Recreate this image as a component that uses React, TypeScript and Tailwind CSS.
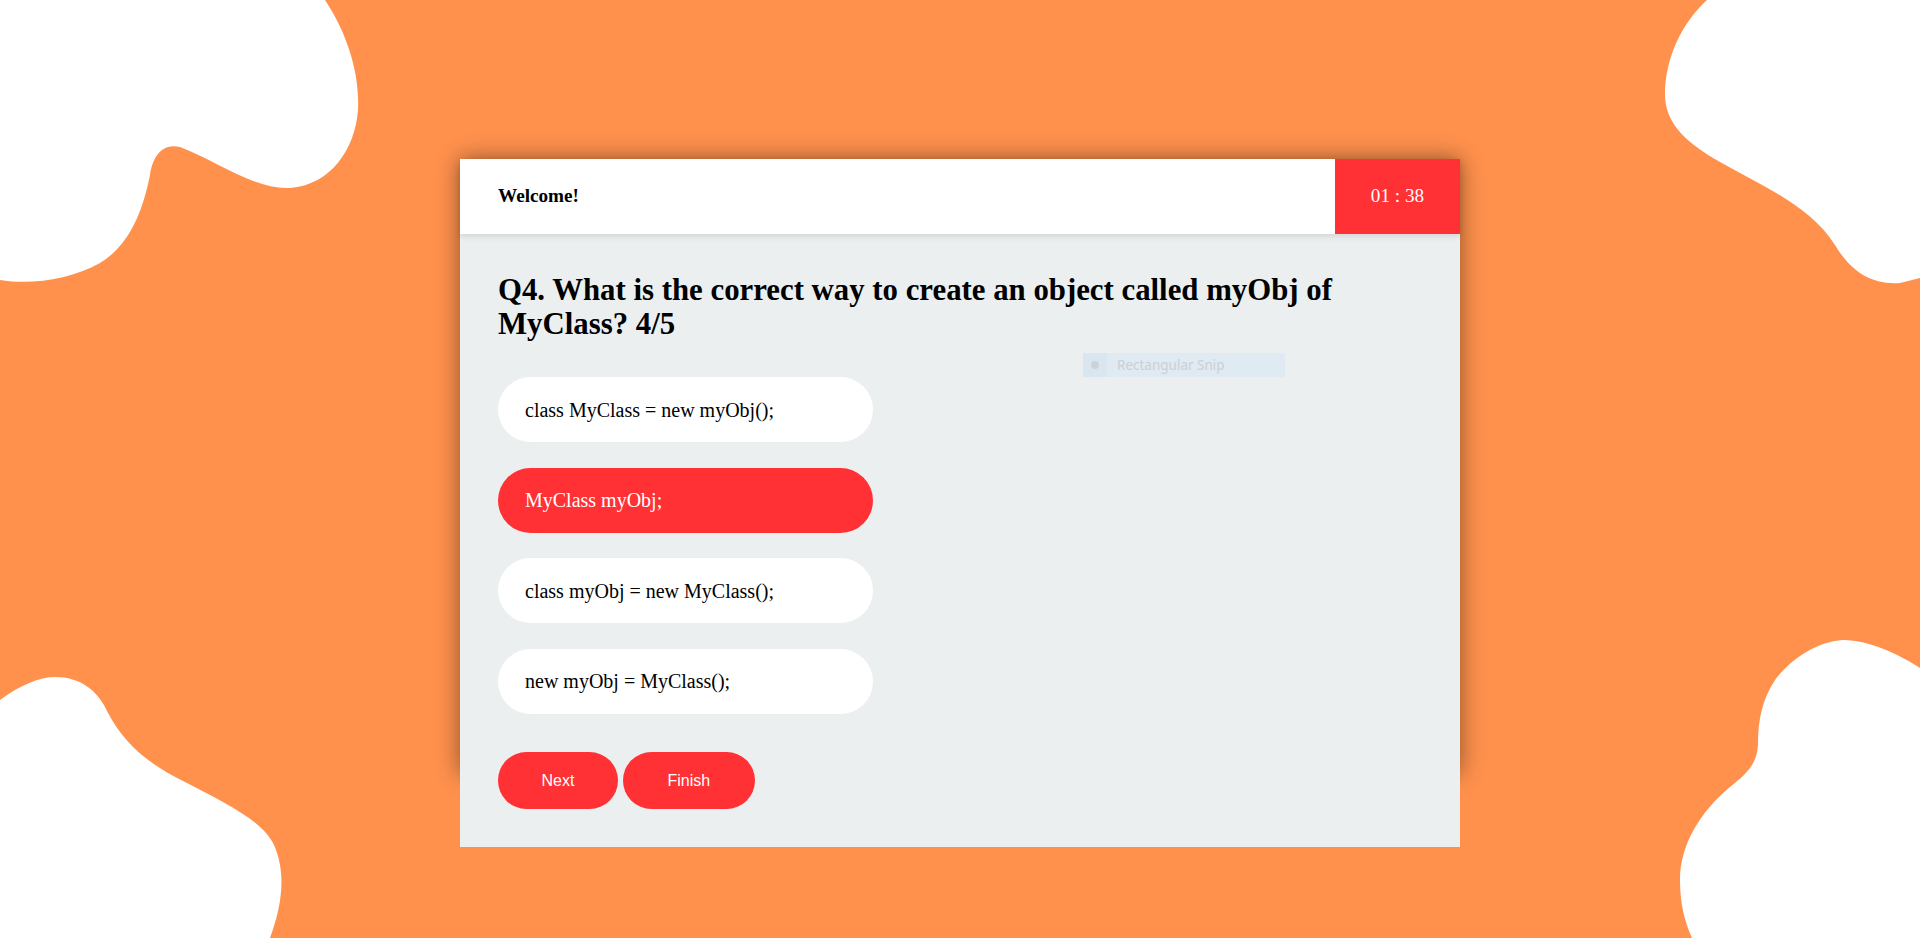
const options = [
  "class MyClass = new myObj();",
  "MyClass myObj;",
  "class myObj = new MyClass();",
  "new myObj = MyClass();",
];

const Blobs = () => (
  <svg
    className="absolute inset-0 w-full h-full"
    viewBox="0 0 1920 938"
    preserveAspectRatio="none"
  >
    {/* top left */}
    <path
      fill="#ffffff"
      d="M0,0 L325,0 C345,30 360,70 358,110 C355,150 330,185 290,188 C255,190 215,160 180,147 C160,142 152,160 150,175 C143,210 130,245 100,263 C70,280 30,285 0,280 Z"
    />
    {/* top right */}
    <path
      fill="#ffffff"
      d="M1707,0 C1680,25 1665,60 1665,95 C1665,125 1690,145 1720,162 C1760,185 1810,205 1835,245 C1850,270 1870,285 1900,283 L1920,278 L1920,0 Z"
    />
    {/* bottom left */}
    <path
      fill="#ffffff"
      d="M0,700 C20,685 40,677 55,677 C80,677 98,690 108,713 C125,745 150,765 185,782 C225,803 262,820 274,845 C285,870 284,900 270,938 L0,938 Z"
    />
    {/* bottom right */}
    <path
      fill="#ffffff"
      d="M1920,668 C1900,655 1870,640 1843,640 C1815,642 1790,660 1775,680 C1762,700 1758,720 1758,745 C1757,765 1745,775 1730,787 C1700,812 1680,845 1680,880 C1680,905 1685,922 1692,938 L1920,938 Z"
    />
  </svg>
);

const App = () => {
  const selected = 1;

  return (
    <div className="relative w-full h-[938px] bg-[#ff914d] overflow-hidden font-['Liberation_Serif','Times_New_Roman',serif]">
      <Blobs />

      <div className="relative flex justify-center pt-[159px]">
        <div className="relative w-[1000px] h-[615px] shadow-[0_0_22px_rgba(0,0,0,0.45)]">
          {/* header */}
          <div className="flex h-[75px] bg-white shadow-[0_2px_6px_rgba(0,0,0,0.12)] relative z-10">
            <div className="flex-1 flex items-center pl-[38px]">
              <p className="text-[19.2px] font-bold text-black">Welcome!</p>
            </div>
            <div className="w-[125px] flex items-center justify-center bg-[#ff3135]">
              <p className="text-[19.2px] text-white">01 : 38</p>
            </div>
          </div>

          {/* body */}
          <div className="bg-[#ebeff0] pt-[39px] px-[38px] pb-[38px]">
            <h2 className="text-[30.8px] font-bold text-black leading-[34px] mb-[36px]">
              Q4. What is the correct way to create an object called myObj of MyClass? 4/5
            </h2>

            <div className="flex flex-col">
              {options.map((opt, i) => (
                <div
                  key={opt}
                  className={`w-[375px] h-[65px] rounded-full flex items-center pl-[27px] text-[20px] cursor-pointer mb-[25.67px] ${
                    i === selected ? "bg-[#ff3135] text-white" : "bg-white text-black"
                  }`}
                >
                  {opt}
                </div>
              ))}
            </div>

            <div className="flex gap-[5px] mt-[12.5px]">
              <button className="h-[57px] px-[43.5px] rounded-full bg-[#ff3135] text-white text-[16px] font-['Liberation_Sans',Arial,sans-serif]">
                Next
              </button>
              <button className="h-[57px] px-[44.5px] rounded-full bg-[#ff3135] text-white text-[16px] font-['Liberation_Sans',Arial,sans-serif]">
                Finish
              </button>
            </div>
          </div>

          {/* stray snipping-tool overlay from the capture */}
          <div className="absolute left-[623px] top-[194px] w-[202px] h-[24px] flex items-center bg-[#dfeaf2] z-20">
            <div className="w-[24px] h-full flex items-center justify-center bg-[#d9e6f0]">
              <span className="w-[8px] h-[8px] rounded-full bg-[#ccd3d8]"></span>
            </div>
            <span className="pl-[10px] text-[13.5px] text-[#cbd0d3] font-['Noto_Sans',sans-serif]">
              Rectangular Snip
            </span>
          </div>
        </div>
      </div>
    </div>
  );
};

export default App;
